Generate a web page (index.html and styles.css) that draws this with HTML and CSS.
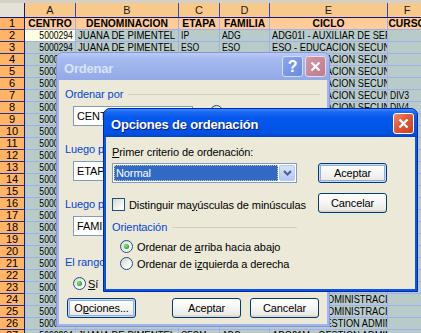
FILE: index.html
```html
<!DOCTYPE html>
<html lang="es">
<head>
    <meta charset="UTF-8">
    <title>Ordenar</title>
    <link rel="stylesheet" href="styles.css">
</head>
<body>
    <div class="sheet">
        <div class="strip"></div>
        <div class="row hdr">
            <div class="corner"></div>
            <div class="ch">A</div><div class="ch">B</div><div class="ch">C</div><div class="ch">D</div><div class="ch">E</div><div class="ch">F</div><div class="ch">G</div>
        </div>
        <div class="row r1">
            <div class="rh">1</div>
            <div class="c">CENTRO</div><div class="c">DENOMINACION</div><div class="c">ETAPA</div><div class="c">FAMILIA</div><div class="c">CICLO</div><div class="c">CURSO</div><div class="c"></div>
        </div>
        <div class="row">
            <div class="rh">2</div>
            <div class="c num cur"><span>5000294</span></div><div class="c"><span>JUANA DE PIMENTEL</span></div><div class="c"><span>IP</span></div><div class="c"><span>ADG</span></div><div class="c"><span>ADG01I - AUXILIAR DE SERVICIOS ADMINISTRATIVOS</span></div><div class="c"></div><div class="c"></div>
        </div>
        <div class="row">
            <div class="rh">3</div>
            <div class="c num"><span>5000294</span></div><div class="c"><span>JUANA DE PIMENTEL</span></div><div class="c"><span>ESO</span></div><div class="c"><span>ESO</span></div><div class="c"><span>ESO - EDUCACION SECUNDARIA OBLIGATORIA</span></div><div class="c"></div><div class="c"></div>
        </div>
        <div class="row">
            <div class="rh">4</div>
            <div class="c num"><span>5000294</span></div><div class="c"><span>JUANA DE PIMENTEL</span></div><div class="c"><span>ESO</span></div><div class="c"><span>ESO</span></div><div class="c"><span>ESO - EDUCACION SECUNDARIA OBLIGATORIA</span></div><div class="c"></div><div class="c"></div>
        </div>
        <div class="row">
            <div class="rh">5</div>
            <div class="c num"><span>5000294</span></div><div class="c"><span>JUANA DE PIMENTEL</span></div><div class="c"><span>ESO</span></div><div class="c"><span>ESO</span></div><div class="c"><span>ESO - EDUCACION SECUNDARIA OBLIGATORIA</span></div><div class="c"></div><div class="c"></div>
        </div>
        <div class="row">
            <div class="rh">6</div>
            <div class="c num"><span>5000294</span></div><div class="c"><span>JUANA DE PIMENTEL</span></div><div class="c"><span>ESO</span></div><div class="c"><span>ESO</span></div><div class="c"><span>ESO - EDUCACION SECUNDARIA OBLIGATORIA</span></div><div class="c"></div><div class="c"></div>
        </div>
        <div class="row">
            <div class="rh">7</div>
            <div class="c num"><span>5000294</span></div><div class="c"><span>JUANA DE PIMENTEL</span></div><div class="c"><span>ESO</span></div><div class="c"><span>ESO</span></div><div class="c"><span>ESO - EDUCACION SECUNDARIA OBLIGATORIA</span></div><div class="c"><span>DIV3</span></div><div class="c"></div>
        </div>
        <div class="row">
            <div class="rh">8</div>
            <div class="c num"><span>5000294</span></div><div class="c"><span>JUANA DE PIMENTEL</span></div><div class="c"><span>ESO</span></div><div class="c"><span>ESO</span></div><div class="c"><span>ESO - EDUCACION SECUNDARIA OBLIGATORIA</span></div><div class="c"><span>DIV4</span></div><div class="c"></div>
        </div>
        <div class="row">
            <div class="rh">9</div>
            <div class="c num"><span>5000294</span></div><div class="c"><span>JUANA DE PIMENTEL</span></div><div class="c"><span>ESO</span></div><div class="c"><span>ESO</span></div><div class="c"><span>ESO - EDUCACION SECUNDARIA OBLIGATORIA</span></div><div class="c"></div><div class="c"></div>
        </div>
        <div class="row">
            <div class="rh">10</div>
            <div class="c num"><span>5000294</span></div><div class="c"><span>JUANA DE PIMENTEL</span></div><div class="c"><span>ESO</span></div><div class="c"><span>ESO</span></div><div class="c"><span>ESO - EDUCACION SECUNDARIA OBLIGATORIA</span></div><div class="c"></div><div class="c"></div>
        </div>
        <div class="row">
            <div class="rh">11</div>
            <div class="c num"><span>5000294</span></div><div class="c"><span>JUANA DE PIMENTEL</span></div><div class="c"><span>ESO</span></div><div class="c"><span>ESO</span></div><div class="c"><span>ESO - EDUCACION SECUNDARIA OBLIGATORIA</span></div><div class="c"></div><div class="c"></div>
        </div>
        <div class="row">
            <div class="rh">12</div>
            <div class="c num"><span>5000294</span></div><div class="c"><span>JUANA DE PIMENTEL</span></div><div class="c"><span>ESO</span></div><div class="c"><span>ESO</span></div><div class="c"><span>ESO - EDUCACION SECUNDARIA OBLIGATORIA</span></div><div class="c"></div><div class="c"></div>
        </div>
        <div class="row">
            <div class="rh">13</div>
            <div class="c num"><span>5000294</span></div><div class="c"><span>JUANA DE PIMENTEL</span></div><div class="c"><span>BACH</span></div><div class="c"><span>BACH</span></div><div class="c"><span>BACH - BACHILLERATO</span></div><div class="c"></div><div class="c"></div>
        </div>
        <div class="row">
            <div class="rh">14</div>
            <div class="c num"><span>5000294</span></div><div class="c"><span>JUANA DE PIMENTEL</span></div><div class="c"><span>BACH</span></div><div class="c"><span>BACH</span></div><div class="c"><span>BACH - BACHILLERATO</span></div><div class="c"></div><div class="c"></div>
        </div>
        <div class="row">
            <div class="rh">15</div>
            <div class="c num"><span>5000294</span></div><div class="c"><span>JUANA DE PIMENTEL</span></div><div class="c"><span>BACH</span></div><div class="c"><span>BACH</span></div><div class="c"><span>BACH - BACHILLERATO</span></div><div class="c"></div><div class="c"></div>
        </div>
        <div class="row">
            <div class="rh">16</div>
            <div class="c num"><span>5000294</span></div><div class="c"><span>JUANA DE PIMENTEL</span></div><div class="c"><span>BACH</span></div><div class="c"><span>BACH</span></div><div class="c"><span>BACH - BACHILLERATO</span></div><div class="c"></div><div class="c"></div>
        </div>
        <div class="row">
            <div class="rh">17</div>
            <div class="c num"><span>5000294</span></div><div class="c"><span>JUANA DE PIMENTEL</span></div><div class="c"><span>CFGM</span></div><div class="c"><span>ADG</span></div><div class="c"><span>ADG21M - GESTION ADMINISTRATIVA</span></div><div class="c"></div><div class="c"></div>
        </div>
        <div class="row">
            <div class="rh">18</div>
            <div class="c num"><span>5000294</span></div><div class="c"><span>JUANA DE PIMENTEL</span></div><div class="c"><span>CFGM</span></div><div class="c"><span>ADG</span></div><div class="c"><span>ADG21M - GESTION ADMINISTRATIVA</span></div><div class="c"></div><div class="c"></div>
        </div>
        <div class="row">
            <div class="rh">19</div>
            <div class="c num"><span>5000294</span></div><div class="c"><span>JUANA DE PIMENTEL</span></div><div class="c"><span>CFGM</span></div><div class="c"><span>ADG</span></div><div class="c"><span>ADG21M - GESTION ADMINISTRATIVA</span></div><div class="c"></div><div class="c"></div>
        </div>
        <div class="row">
            <div class="rh">20</div>
            <div class="c num"><span>5000294</span></div><div class="c"><span>JUANA DE PIMENTEL</span></div><div class="c"><span>CFGM</span></div><div class="c"><span>ADG</span></div><div class="c"><span>ADG21M - GESTION ADMINISTRATIVA</span></div><div class="c"></div><div class="c"></div>
        </div>
        <div class="row">
            <div class="rh">21</div>
            <div class="c num"><span>5000294</span></div><div class="c"><span>JUANA DE PIMENTEL</span></div><div class="c"><span>CFGS</span></div><div class="c"><span>ADG</span></div><div class="c"><span>ADG301S - ADMINISTRACIÓN Y FINANZAS</span></div><div class="c"></div><div class="c"></div>
        </div>
        <div class="row">
            <div class="rh">22</div>
            <div class="c num"><span>5000294</span></div><div class="c"><span>JUANA DE PIMENTEL</span></div><div class="c"><span>CFGS</span></div><div class="c"><span>ADG</span></div><div class="c"><span>ADG301S - ADMINISTRACIÓN Y FINANZAS</span></div><div class="c"></div><div class="c"></div>
        </div>
        <div class="row">
            <div class="rh">23</div>
            <div class="c num"><span>5000294</span></div><div class="c"><span>JUANA DE PIMENTEL</span></div><div class="c"><span>CFGS</span></div><div class="c"><span>ADG</span></div><div class="c"><span>ADG301S - ADMINISTRACIÓN Y FINANZAS</span></div><div class="c"></div><div class="c"></div>
        </div>
        <div class="row">
            <div class="rh">24</div>
            <div class="c num"><span>5000294</span></div><div class="c"><span>JUANA DE PIMENTEL</span></div><div class="c"><span>CFGS</span></div><div class="c"><span>ADG</span></div><div class="c"><span>ADG301S - ADMINISTRACIÓN Y FINANZAS</span></div><div class="c"></div><div class="c"></div>
        </div>
        <div class="row">
            <div class="rh">25</div>
            <div class="c num"><span>5000294</span></div><div class="c"><span>JUANA DE PIMENTEL</span></div><div class="c"><span>CFGS</span></div><div class="c"><span>ADG</span></div><div class="c"><span>ADG301S - ADMINISTRACIÓN Y FINANZAS</span></div><div class="c"></div><div class="c"></div>
        </div>
        <div class="row">
            <div class="rh">26</div>
            <div class="c num"><span>5000294</span></div><div class="c"><span>JUANA DE PIMENTEL</span></div><div class="c"><span>CFGM</span></div><div class="c"><span>ADG</span></div><div class="c"><span>ADG21M - GESTION ADMINISTRATIVA</span></div><div class="c"></div><div class="c"></div>
        </div>
        <div class="row">
            <div class="rh">27</div>
            <div class="c num"><span>5000294</span></div><div class="c"><span>JUANA DE PIMENTEL</span></div><div class="c"><span>CFGM</span></div><div class="c"><span>ADG</span></div><div class="c"><span>ADG21M - GESTION ADMINISTRATIVA</span></div><div class="c"></div><div class="c"></div>
        </div>
    </div>

    <!-- Dialogo Ordenar (inactivo, detras) -->
    <div class="win inactive ordenar">
        <div class="titlebar">
            <span class="title">Ordenar</span>
            <span class="tb-btn help">?</span>
            <span class="tb-btn close">
                <svg width="19" height="19" viewBox="0 0 19 19"><path d="M5.5 5.5L13.5 13.5M13.5 5.5L5.5 13.5" stroke="#fff" stroke-width="2.2"/></svg>
            </span>
        </div>
        <div class="client o-client">
            <div class="ghead">Ordenar por</div>
            <div class="o-row">
                <div class="combo o-combo"><span class="val">CENTRO</span><span class="dd"><svg width="9" height="6" viewBox="0 0 9 6"><path d="M1 1L4.5 4.5L8 1" stroke="#4D6185" stroke-width="2" fill="none"/></svg></span></div>
                <div class="o-radios">
                    <div class="opt"><span class="radio on"></span><span>Ascendente</span></div>
                    <div class="opt"><span class="radio"></span><span>Descendente</span></div>
                </div>
            </div>
            <div class="ghead next">Luego por</div>
            <div class="o-row">
                <div class="combo o-combo"><span class="val">ETAPA</span><span class="dd"><svg width="9" height="6" viewBox="0 0 9 6"><path d="M1 1L4.5 4.5L8 1" stroke="#4D6185" stroke-width="2" fill="none"/></svg></span></div>
                <div class="o-radios">
                    <div class="opt"><span class="radio on"></span><span>Ascendente</span></div>
                    <div class="opt"><span class="radio"></span><span>Descendente</span></div>
                </div>
            </div>
            <div class="ghead next">Luego por</div>
            <div class="o-row">
                <div class="combo o-combo"><span class="val">FAMILIA</span><span class="dd"><svg width="9" height="6" viewBox="0 0 9 6"><path d="M1 1L4.5 4.5L8 1" stroke="#4D6185" stroke-width="2" fill="none"/></svg></span></div>
                <div class="o-radios">
                    <div class="opt"><span class="radio on"></span><span>Ascendente</span></div>
                    <div class="opt"><span class="radio"></span><span>Descendente</span></div>
                </div>
            </div>
            <div class="ghead rango">El rango de datos tiene fila de encabezamiento</div>
            <div class="o-yesno">
                <div class="opt"><span class="radio on"></span><span><u>S</u>í</span></div>
                <div class="opt"><span class="radio"></span><span><u>N</u>o</span></div>
            </div>
            <div class="o-btns">
                <div class="btn def">O<u>p</u>ciones...</div>
                <div class="btn push">Aceptar</div>
                <div class="btn">Cancelar</div>
            </div>
        </div>
    </div>

    <!-- Dialogo Opciones de ordenacion (activo) -->
    <div class="win active opciones">
        <div class="titlebar">
            <span class="title">Opciones de ordenación</span>
            <span class="tb-btn close">
                <svg width="19" height="19" viewBox="0 0 19 19"><path d="M5.5 5.5L13.5 13.5M13.5 5.5L5.5 13.5" stroke="#fff" stroke-width="2.4"/></svg>
            </span>
        </div>
        <div class="client p-client">
            <div class="p-left">
                <div class="lbl"><u>P</u>rimer criterio de ordenación:</div>
                <div class="combo p-combo"><span class="val focus">Normal</span><span class="dd"><svg width="9" height="6" viewBox="0 0 9 6"><path d="M1 1L4.5 4.5L8 1" stroke="#4D6185" stroke-width="2" fill="none"/></svg></span></div>
                <div class="chk-row"><span class="chk"></span><span>Distinguir ma<u>y</u>úsculas de minúsculas</span></div>
                <div class="ghead orient">Orientación</div>
                <div class="opt p-opt"><span class="radio on"></span><span>Ordenar de <u>a</u>rriba hacia abajo</span></div>
                <div class="opt p-opt second"><span class="radio"></span><span>Ordenar de i<u>z</u>quierda a derecha</span></div>
            </div>
            <div class="p-right">
                <div class="btn def">Aceptar</div>
                <div class="btn cancel">Cancelar</div>
            </div>
        </div>
    </div>
</body>
</html>
```

FILE: styles.css
```css
body {
    margin: 0;
    width: 421px;
    height: 333px;
    overflow: hidden;
    position: relative;
    background: #fff;
    font-family: "Liberation Sans", Arial, sans-serif;
}

/* ---- hoja de calculo ---- */
.sheet {
    width: 421px;
    overflow: hidden;
}
.strip {
    height: 3px;
    background: #D4D0C8;
}
.row {
    display: grid;
    grid-template-columns: 25px 51px 103px 41px 50px 118px 39px 60px;
    height: 12px;
}
.c, .rh, .ch, .corner {
    box-sizing: border-box;
    overflow: hidden;
    white-space: nowrap;
    border-right: 1px solid #9DB0EC;
    border-bottom: 1px solid #9DB0EC;
}
.c {
    background: #B9CBC9;
    font-size: 10.5px;
    line-height: 11px;
    padding: 0 2px;
    color: #000;
}
/* la hoja usa una letra estrecha */
.c span {
    display: inline-block;
    transform: scaleX(0.82);
    transform-origin: 0 50%;
}
.c:nth-child(3) span {
    transform: scaleX(0.91);
}
.c:nth-child(6) span {
    transform: scaleX(0.88);
}
.num {
    text-align: right;
}
.num span {
    transform-origin: 100% 50%;
}
.cur {
    background: #FFFFE4;
}
.rh {
    background: #FFB466;
    border-right-color: #0A1A8C;
    border-bottom-color: #22339C;
    font-size: 11px;
    line-height: 11px;
    text-align: center;
    color: #000;
}
.hdr {
    height: 15px;
}
.ch {
    background: #F9C98C;
    border-right-color: #2D4BC4;
    border-bottom-color: #0A1A8C;
    font-size: 11px;
    line-height: 14px;
    text-align: center;
    color: #1A1A1A;
}
.corner {
    background: #E4E1D6;
    border-right-color: #0A1A8C;
    border-bottom-color: #0A1A8C;
}
.r1 .c {
    background: #FFCC99;
    font-weight: bold;
    font-size: 10.3px;
    text-align: center;
    padding: 0;
}

/* ---- ventanas estilo XP ---- */
.win {
    position: absolute;
    box-sizing: border-box;
    display: flex;
    flex-direction: column;
    border: 1px solid;
    border-radius: 7px 7px 0 0;
    overflow: hidden;
    font-size: 11px;
    letter-spacing: -0.1px;
    color: #000;
}
.ordenar {
    left: 56px;
    top: 52px;
    width: 274px;
    height: 275px;
}
.opciones {
    left: 103px;
    top: 108px;
    width: 315px;
    height: 184px;
}
.inactive {
    background: #A2B4EA;
    border-color: #8497DC;
}
.active {
    background: #0757E6;
    border-color: #0026B0;
}
.titlebar {
    display: flex;
    align-items: center;
    gap: 2px;
    padding: 0 3px 0 7px;
    flex: none;
}
.inactive .titlebar {
    height: 27px;
    background: linear-gradient(#BCCBF3, #A6BAF0 20%, #9DB2EC 60%, #93A9E6);
}
.active .titlebar {
    height: 28px;
    background: linear-gradient(#3E8CF6, #1C6BF2 10%, #0558EC 30%, #0054E6 70%, #0050DF 90%, #0042CC);
}
.title {
    flex: 1;
    font-weight: bold;
    font-size: 13px;
    letter-spacing: -0.2px;
    padding-top: 3px;
}
.inactive .title {
    color: #D8E4F8;
}
.active .title {
    color: #fff;
    text-shadow: 1px 1px #0A1883;
}
.tb-btn {
    box-sizing: border-box;
    width: 21px;
    height: 21px;
    border: 1px solid #fff;
    border-radius: 3px;
    display: flex;
    align-items: center;
    justify-content: center;
    color: #fff;
    font-weight: bold;
    font-size: 16px;
}
.inactive .help {
    background: linear-gradient(135deg, #8AA6EE, #6A8BE3);
    border-color: #D4DEF7;
}
.inactive .close {
    background: linear-gradient(135deg, #D197A4, #BF7B8B);
    border-color: #EBDADF;
}
.active .close {
    background: linear-gradient(135deg, #F08A6A, #E0583A 45%, #C8401F);
}
.client {
    flex: 1;
    margin: 0 2px 2px;
    background: #ECE9D8;
    box-sizing: border-box;
}

/* controles */
.ghead {
    display: flex;
    align-items: center;
    height: 13px;
    line-height: 13px;
    color: #0046D5;
    white-space: nowrap;
}
.ghead::after {
    content: "";
    flex: 1;
    border-top: 1px solid #D0D0BF;
    margin-left: 5px;
}
.combo {
    box-sizing: border-box;
    height: 20px;
    background: #fff;
    border: 1px solid #7F9DB9;
    display: flex;
    align-items: center;
    padding: 1px;
}
.combo .val {
    flex: 1;
    padding-left: 2px;
    line-height: 14px;
}
.combo .dd {
    box-sizing: border-box;
    width: 16px;
    height: 16px;
    border: 1px solid #B5C8F3;
    border-radius: 2px;
    background: linear-gradient(#D8E4FC, #C1D3FB 60%, #B4C8F6);
    display: flex;
    align-items: center;
    justify-content: center;
}
.val.focus {
    background: #316AC5;
    color: #fff;
    outline: 1px dotted #C2C8A8;
    outline-offset: -1px;
    margin-right: 1px;
    height: 16px;
    line-height: 16px;
}
.opt {
    display: flex;
    align-items: center;
    gap: 4px;
    height: 13px;
    white-space: nowrap;
}
.radio {
    box-sizing: border-box;
    width: 13px;
    height: 13px;
    border-radius: 50%;
    border: 1px solid #1C5180;
    background: linear-gradient(135deg, #D6D5CC, #F4F4F0 60%, #fff);
    display: flex;
    align-items: center;
    justify-content: center;
    flex: none;
}
.radio.on::after {
    content: "";
    width: 5px;
    height: 5px;
    border-radius: 50%;
    background: radial-gradient(circle at 40% 40%, #8AE88A, #2CB32C 60%, #1A8C1A);
}
.chk {
    box-sizing: border-box;
    width: 13px;
    height: 13px;
    border: 1px solid #1C5180;
    background: linear-gradient(135deg, #D6D5CC, #F4F4F0 60%, #fff);
    flex: none;
}
.btn {
    box-sizing: border-box;
    width: 69px;
    height: 20px;
    border: 1px solid #003C74;
    border-radius: 3px;
    background: linear-gradient(#FFFFFF, #F6F6F3 45%, #ECEBE6 85%, #D6D0C5);
    display: flex;
    align-items: center;
    justify-content: center;
    white-space: nowrap;
}
.btn.def {
    box-shadow: inset 0 0 0 1px #C6DAF8, inset 0 0 0 2px #8FAEE6;
}

/* contenido Ordenar */
.o-client {
    padding: 8px 7px 0 6px;
}
.o-row {
    display: flex;
    margin-top: 5px;
    height: 20px;
}
.o-combo {
    width: 120px;
    margin-left: 8px;
}
.o-radios {
    margin-left: 17px;
    margin-top: -1px;
    display: flex;
    flex-direction: column;
    gap: 3px;
}
.ghead.next {
    margin-top: 17px;
}
.ghead.rango {
    margin-top: 20px;
}
.o-yesno {
    display: flex;
    gap: 40px;
    margin: 8px 0 0 8px;
}
.o-yesno .opt {
    gap: 2px;
}
.o-btns {
    display: flex;
    gap: 9px;
    margin: 8px 1px 0 2px;
}
.o-btns .push {
    margin-left: auto;
}

/* contenido Opciones */
.p-client {
    display: flex;
    gap: 21px;
    padding: 9px 0 0 6px;
}
.p-left {
    width: 185px;
}
.lbl {
    height: 13px;
    line-height: 13px;
    white-space: nowrap;
}
.p-combo {
    margin-top: 4px;
}
.chk-row {
    display: flex;
    align-items: center;
    gap: 4px;
    height: 13px;
    margin-top: 15px;
    white-space: nowrap;
}
.ghead.orient {
    margin-top: 10px;
}
.p-opt {
    margin: 6px 0 0 8px;
}
.p-opt.second {
    margin-top: 4px;
}
.p-right {
    padding-top: 17px;
}
.p-right .cancel {
    margin-top: 10px;
}
```
